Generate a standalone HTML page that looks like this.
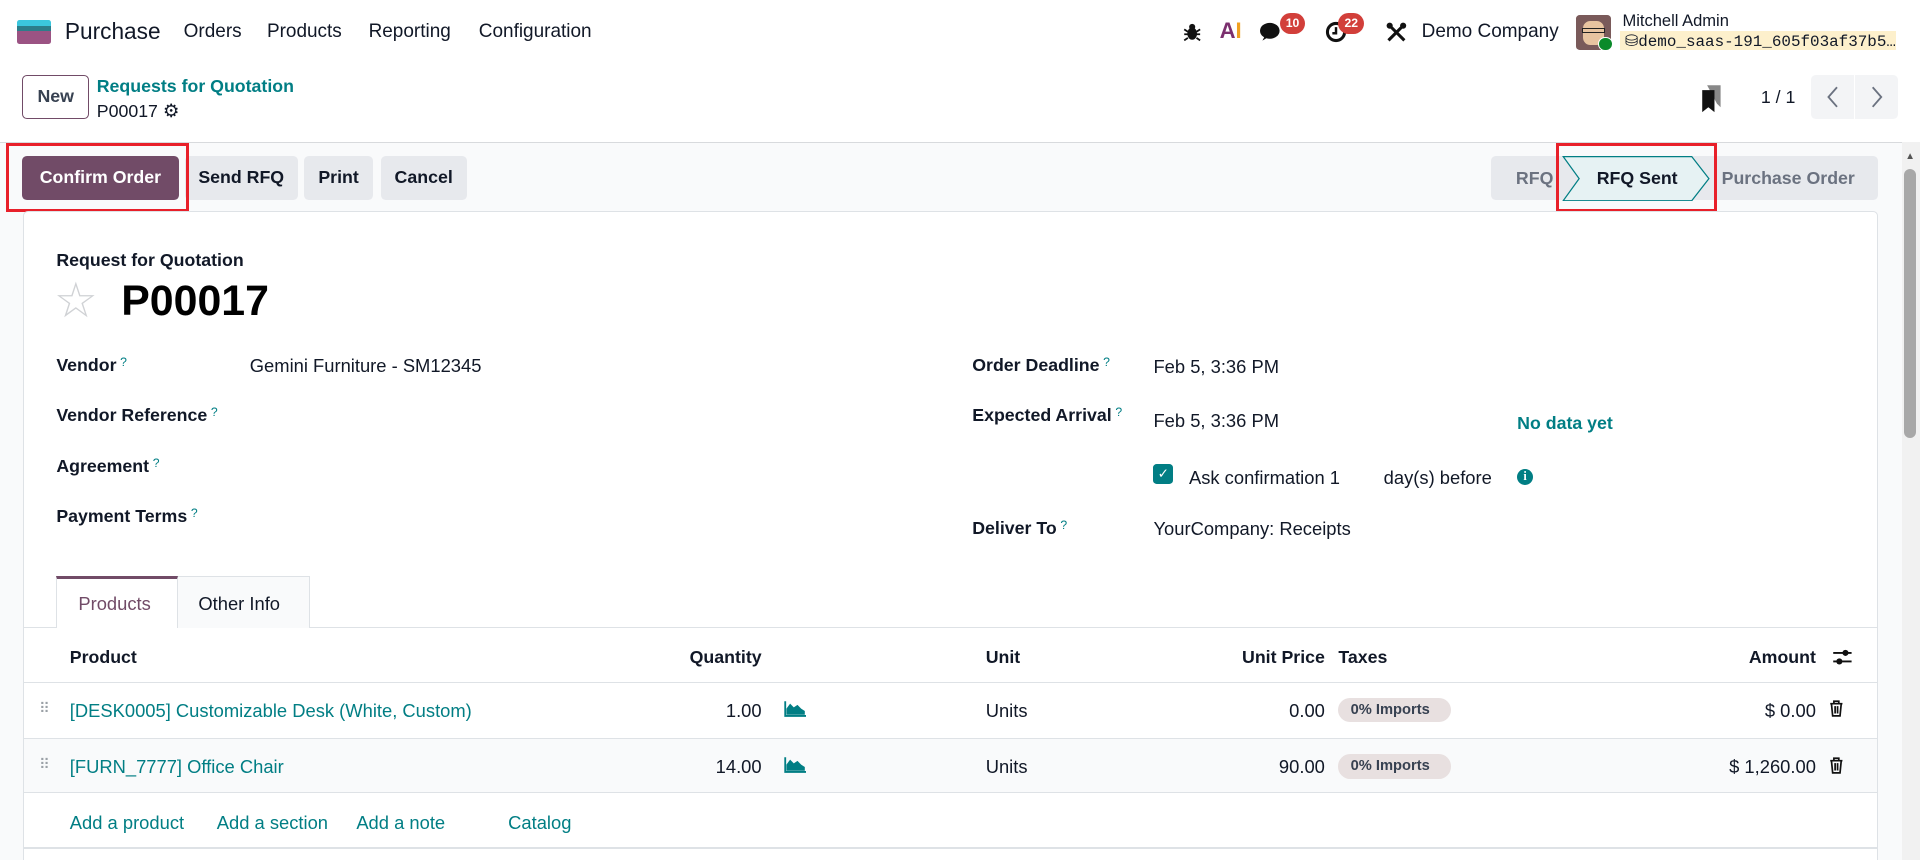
<!DOCTYPE html>
<html><head><meta charset="utf-8">
<style>
*{box-sizing:border-box;margin:0;padding:0}
html,body{width:1920px;height:860px;overflow:hidden;background:#fff}
#w{zoom:1.22449;width:1568px;height:703px;position:relative;font-family:"Liberation Sans",sans-serif;color:#111827;font-size:15px;overflow:hidden}
.a{position:absolute;white-space:nowrap}
.b{font-weight:bold;font-size:14.5px}
.t{color:#017e84}
.q{color:#017e84;font-size:10px;vertical-align:top;margin-left:3px;font-weight:normal}
.btn{position:absolute;top:127px;height:36px;border-radius:4px;background:#e7e9ed;font-weight:bold;font-size:14.5px;display:flex;align-items:center;justify-content:center}
.badge{position:absolute;background:#d23f3a;color:#fff;font-size:10px;font-weight:bold;border-radius:9px;height:17px;line-height:17px;padding:0 5px}
.tag{position:absolute;background:#e8e0e0;border-radius:10px;font-size:12px;font-weight:bold;color:#374151;padding:0 10px;height:20px;line-height:20px;width:92px}
</style></head><body><div id="w">
<div class="a" style="left:14px;top:16px;width:28px;height:20px;border-radius:2px;overflow:hidden">
<div style="height:5px;background:#3bc6dd"></div><div style="height:4px;background:#2c7d8a"></div><div style="height:11px;background:#9b5383"></div></div>
<div class="a" style="left:53px;top:15px;font-size:18.5px">Purchase</div>
<div class="a" style="left:150px;top:17px;font-size:15.5px">Orders</div>
<div class="a" style="left:218px;top:17px;font-size:15.5px">Products</div>
<div class="a" style="left:301px;top:17px;font-size:15.5px">Reporting</div>
<div class="a" style="left:391px;top:17px;font-size:15.5px">Configuration</div>
<svg class="a" style="left:966px;top:18px" width="15" height="16" viewBox="0 0 15 16"><ellipse cx="7.5" cy="9.5" rx="4" ry="5" fill="#111"/><circle cx="7.5" cy="4" r="2.5" fill="#111"/><path d="M1 6l3 2M14 6l-3 2M1 10h3M14 10h-3M1 15l3-2M14 15l-3-2" stroke="#111" stroke-width="1.5"/></svg>
<div class="a" style="left:996px;top:15px;font-size:18px;font-weight:bold"><span style="color:#7b2f6e">A</span><span style="color:#f0a020">I</span></div>
<svg class="a" style="left:1029px;top:17px" width="20" height="18" viewBox="0 0 20 18"><ellipse cx="8" cy="8" rx="8" ry="6.5" fill="#111"/><path d="M4 12l-2 4 5-3z" fill="#111"/></svg>
<div class="badge" style="left:1045px;top:11px">10</div>
<svg class="a" style="left:1082px;top:17px" width="18" height="18" viewBox="0 0 18 18"><circle cx="9" cy="9" r="7" fill="none" stroke="#111" stroke-width="2.5"/><path d="M9 5v5H6" stroke="#111" stroke-width="2" fill="none"/></svg>
<div class="badge" style="left:1093px;top:11px">22</div>
<svg class="a" style="left:1132px;top:18px" width="17" height="17" viewBox="0 0 17 17"><path d="M2 15L15 2M2 2l13 13" stroke="#111" stroke-width="2.5"/><circle cx="3" cy="3" r="2.5" fill="#111"/><circle cx="14" cy="3" r="2.5" fill="#111"/></svg>
<div class="a" style="left:1161px;top:17px;font-size:15.5px">Demo Company</div>
<div class="a" style="left:1287px;top:12px;width:29px;height:29px;border-radius:3px;background:#7a5a5a"><div style="position:absolute;left:6px;top:5px;width:17px;height:20px;background:#e8c4a0;border-radius:6px"></div><div style="position:absolute;left:5px;top:11px;width:19px;height:4px;border:1px solid #222"></div></div>
<div class="a" style="left:1305px;top:30px;width:12px;height:12px;border-radius:50%;background:#0a8a2a;border:1px solid #fff"></div>
<div class="a" style="left:1325px;top:9px;font-size:13.5px">Mitchell Admin</div>
<div class="a" style="left:1323px;top:25px;width:225px;height:16px;background:#fdf0cc"></div>
<div class="a" style="left:1327px;top:25px;font-size:13px;font-family:'Liberation Mono',monospace">&#9921;demo_saas-191_605f03af37b5…</div>
<div class="a" style="left:18px;top:61px;width:55px;height:36px;border:1px solid #714b67;border-radius:4px;font-weight:bold;font-size:14.5px;color:#374151;text-align:center;line-height:34px">New</div>
<div class="a b t" style="left:79px;top:62px">Requests for Quotation</div>
<div class="a" style="left:79px;top:82px;font-size:14.5px">P00017 <span style="font-size:15px">&#9881;</span></div>
<svg class="a" style="left:1389px;top:69px" width="18" height="24" viewBox="0 0 18 24"><path d="M5 1h11v18l-3-3z" fill="#888"/><path d="M1 5h10v18l-5-4-5 4z" fill="#111"/></svg>
<div class="a" style="left:1438px;top:71px;font-size:14.5px">1 / 1</div>
<div class="a" style="left:1479px;top:61px;width:71px;height:36px;background:#f3f4f6;border-radius:4px"></div>
<div class="a" style="left:1514px;top:61px;width:1px;height:36px;background:#fff"></div>
<svg class="a" style="left:1491px;top:70px" width="12" height="18" viewBox="0 0 12 18"><path d="M9 1L2 9l7 8" stroke="#6b7280" stroke-width="1.5" fill="none"/></svg>
<svg class="a" style="left:1526px;top:70px" width="12" height="18" viewBox="0 0 12 18"><path d="M3 1l7 8-7 8" stroke="#6b7280" stroke-width="1.5" fill="none"/></svg>
<div class="a" style="left:0;top:116px;width:1568px;height:600px;background:#f9fafb;border-top:1px solid #d8dadd"></div>
<div class="btn" style="left:18px;width:128px;background:#714b67;color:#fff">Confirm Order</div>
<div class="btn" style="left:151px;width:92px">Send RFQ</div>
<div class="btn" style="left:248px;width:57px">Print</div>
<div class="btn" style="left:311px;width:70px">Cancel</div>
<div class="a" style="left:5px;top:117px;width:149px;height:56px;border:3px solid #e8202a"></div>
<div class="a" style="left:1218px;top:127px;width:316px;height:36px;background:#e7e9ed;border-radius:4px"></div>
<div class="a b" style="left:1238px;top:137px;color:#6b7280">RFQ</div>
<svg class="a" style="left:1276px;top:127px" width="122" height="37" viewBox="0 0 122 37"><path d="M1 0.5H106L120 18.5L106 36.5H1L14 18.5Z" fill="#e6f2f3" stroke="#017e84"/></svg>
<div class="a b" style="left:1304px;top:137px">RFQ Sent</div>
<div class="a b" style="left:1406px;top:137px;color:#6b7280">Purchase Order</div>
<div class="a" style="left:1271px;top:117px;width:131px;height:56px;border:3px solid #e8202a"></div>
<div class="a" style="left:1553px;top:116px;width:15px;height:600px;background:#f1f1f1"></div>
<div class="a" style="left:1556px;top:123px;font-size:8px;color:#555">&#9650;</div>
<div class="a" style="left:1555px;top:138px;width:10px;height:220px;background:#a8a8a8;border-radius:5px"></div>
<div class="a" style="left:19px;top:172px;width:1515px;height:560px;background:#fff;border:1px solid #dee2e6;border-radius:4px"></div>
<div class="a b" style="left:46px;top:204px">Request for Quotation</div>
<div class="a" style="left:44px;top:222px;font-size:40px;color:#d0d2d5">&#9734;</div>
<div class="a" style="left:99px;top:226px;font-size:35px;font-weight:bold;color:#000">P00017</div>
<div class="a b" style="left:46px;top:290px">Vendor<span class="q">?</span></div>
<div class="a" style="left:204px;top:290px">Gemini Furniture - SM12345</div>
<div class="a b" style="left:46px;top:331px">Vendor Reference<span class="q">?</span></div>
<div class="a b" style="left:46px;top:372px">Agreement<span class="q">?</span></div>
<div class="a b" style="left:46px;top:413px">Payment Terms<span class="q">?</span></div>
<div class="a b" style="left:794px;top:290px">Order Deadline<span class="q">?</span></div>
<div class="a" style="left:942px;top:291px">Feb 5, 3:36 PM</div>
<div class="a b" style="left:794px;top:331px">Expected Arrival<span class="q">?</span></div>
<div class="a" style="left:942px;top:335px">Feb 5, 3:36 PM</div>
<div class="a b t" style="left:1239px;top:337px">No data yet</div>
<div class="a" style="left:942px;top:379px;width:16px;height:16px;border-radius:3px;background:#017e84;color:#fff;font-size:11px;text-align:center;line-height:16px">&#10003;</div>
<div class="a" style="left:971px;top:381px">Ask confirmation 1</div>
<div class="a" style="left:1130px;top:381px">day(s) before</div>
<div class="a" style="left:1239px;top:383px;width:13px;height:13px;border-radius:50%;background:#017e84;color:#fff;font-size:10px;font-weight:bold;text-align:center;line-height:13px;font-family:'Liberation Serif',serif">i</div>
<div class="a b" style="left:794px;top:423px">Deliver To<span class="q">?</span></div>
<div class="a" style="left:942px;top:423px">YourCompany: Receipts</div>
<div class="a" style="left:20px;top:512px;width:1513px;height:1px;background:#dee2e6"></div>
<div class="a" style="left:46px;top:470px;width:99px;height:43px;background:#fff;border:1px solid #dee2e6;border-top:3px solid #714b67;border-bottom:none"></div>
<div class="a" style="left:64px;top:484px;color:#714b67">Products</div>
<div class="a" style="left:145px;top:470px;width:108px;height:43px;background:#f9fafb;border:1px solid #dee2e6;border-left:none;border-bottom:none"></div>
<div class="a" style="left:162px;top:484px">Other Info</div>
<div class="a b" style="left:57px;top:528px">Product</div>
<div class="a b" style="left:500px;width:122px;text-align:right;top:528px">Quantity</div>
<div class="a b" style="left:805px;top:528px">Unit</div>
<div class="a b" style="left:960px;width:122px;text-align:right;top:528px">Unit Price</div>
<div class="a b" style="left:1093px;top:528px">Taxes</div>
<div class="a b" style="left:1360px;width:123px;text-align:right;top:528px">Amount</div>
<svg class="a" style="left:1496px;top:529px" width="17" height="15" viewBox="0 0 17 15"><path d="M1 4h15M1 11h15" stroke="#111" stroke-width="1.5"/><circle cx="11" cy="4" r="2.5" fill="#111"/><circle cx="6" cy="11" r="2.5" fill="#111"/></svg>
<div class="a" style="left:20px;top:557px;width:1513px;height:1px;background:#dee2e6"></div>
<div class="a" style="left:20px;top:603px;width:1513px;height:45px;background:#f9fafb;border-top:1px solid #dee2e6;border-bottom:1px solid #dee2e6"></div>
<div class="a" style="left:20px;top:692px;width:1513px;height:1px;background:#dee2e6"></div>
<div class="a" style="left:32px;top:572px;font-size:12px;color:#9aa0a6">⠿</div>
<div class="a" style="left:32px;top:617px;font-size:12px;color:#9aa0a6">⠿</div>
<div class="a t" style="left:57px;top:572px">[DESK0005] Customizable Desk (White, Custom)</div>
<div class="a t" style="left:57px;top:617px">[FURN_7777] Office Chair</div>
<div class="a" style="left:500px;width:122px;text-align:right;top:572px">1.00</div>
<div class="a" style="left:500px;width:122px;text-align:right;top:617px">14.00</div>
<svg class="a" style="left:640px;top:572px" width="18" height="14" viewBox="0 0 18 14"><path d="M1 1v12h17" stroke="#017e84" stroke-width="1.5" fill="none"/><path d="M2 12V7l3-4 3 3 3-2 3 3 3 2v3z" fill="#017e84"/></svg>
<svg class="a" style="left:640px;top:617px" width="18" height="14" viewBox="0 0 18 14"><path d="M1 1v12h17" stroke="#017e84" stroke-width="1.5" fill="none"/><path d="M2 12V7l3-4 3 3 3-2 3 3 3 2v3z" fill="#017e84"/></svg>
<div class="a" style="left:805px;top:572px">Units</div>
<div class="a" style="left:805px;top:617px">Units</div>
<div class="a" style="left:960px;width:122px;text-align:right;top:572px">0.00</div>
<div class="a" style="left:960px;width:122px;text-align:right;top:617px">90.00</div>
<div class="tag" style="left:1093px;top:570px">0% Imports</div>
<div class="tag" style="left:1093px;top:616px">0% Imports</div>
<div class="a" style="left:1360px;width:123px;text-align:right;top:572px">$ 0.00</div>
<div class="a" style="left:1360px;width:123px;text-align:right;top:617px">$ 1,260.00</div>
<svg class="a" style="left:1494px;top:572px" width="12" height="14" viewBox="0 0 12 14"><path d="M1 3h10M4 3V1h4v2M2 3l1 10h6l1-10M5 5v6M7 5v6" stroke="#111" stroke-width="1.4" fill="none"/></svg>
<svg class="a" style="left:1494px;top:618px" width="12" height="14" viewBox="0 0 12 14"><path d="M1 3h10M4 3V1h4v2M2 3l1 10h6l1-10M5 5v6M7 5v6" stroke="#111" stroke-width="1.4" fill="none"/></svg>
<div class="a t" style="left:57px;top:663px">Add a product</div>
<div class="a t" style="left:177px;top:663px">Add a section</div>
<div class="a t" style="left:291px;top:663px">Add a note</div>
<div class="a t" style="left:415px;top:663px">Catalog</div>
</div></body></html>
